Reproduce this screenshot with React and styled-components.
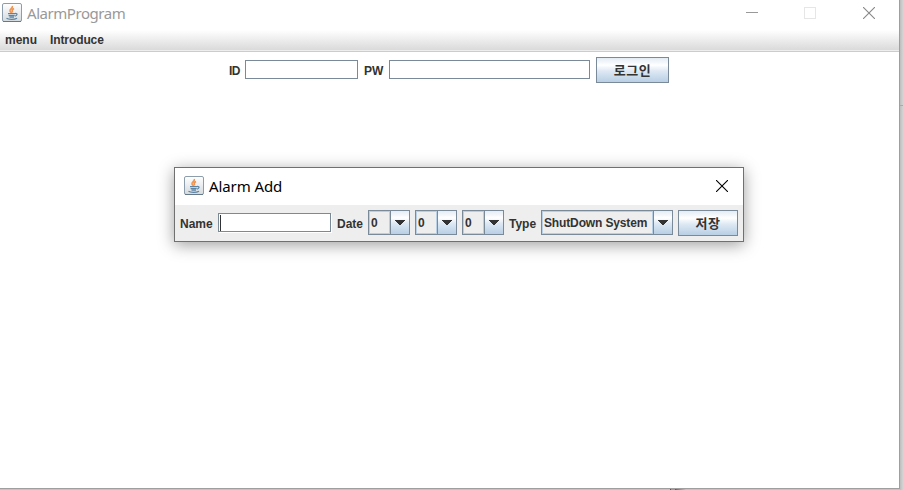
import React from "react";
import styled, { createGlobalStyle } from "styled-components";

const GlobalStyle = createGlobalStyle`
  * { box-sizing: border-box; }
  html, body { margin: 0; padding: 0; overflow: hidden; background: #c9c9c9; }
`;

const Desktop = styled.div`
  display: flex;
  align-items: flex-start;
  width: 903px;
  height: 490px;
  overflow: hidden;
  background: linear-gradient(90deg, #c4c4c4 670px, #555 670px, #555 671px, #999 671px, #999 675px, #555 675px, #777 677px, #c4c4c4 686px);
  font: bold 12px/14px "Liberation Sans", "Noto Sans CJK KR", sans-serif;
  color: #333;
`;

const Window = styled.div`
  position: relative;
  width: 900px;
  height: 489px;
  flex: none;
  background: #fff;
  border-right: 1px solid #9f9f9f;
  border-bottom: 1px solid #9f9f9f;
`;

const Backdrop = styled.div`
  width: 3px;
  height: 490px;
  background: linear-gradient(90deg, #bdbdbd, #d4d4d4);
`;

const BackdropTop = styled.div`
  height: 106px;
  border-bottom: 1px solid #aaa;
`;

const TitleBar = styled.div`
  display: flex;
  align-items: flex-start;
  height: ${(p) => (p.$dialog ? 37 : 30)}px;
  padding: ${(p) => (p.$dialog ? "8px 15px 0 9px" : "3px 24px 0 2px")};
  background: #fff;
`;

const Title = styled.span`
  flex: 1;
  margin-left: 5px;
  font: 400 15px/20px "Noto Sans", sans-serif;
  letter-spacing: ${(p) => p.$spacing}px;
  color: ${(p) => (p.$active ? "#000" : "#999")};
`;

const Controls = styled.div`
  display: flex;
  padding-top: 4px;
`;

const ControlSlot = styled.span`
  display: flex;
  width: ${(p) => p.$w}px;
`;

const MenuBar = styled.div`
  display: flex;
  gap: 13px;
  height: 22px;
  padding: 3px 5px 0;
  background: linear-gradient(#fff, #dadada 20px, #eee 20px);
  border-bottom: 1px solid #ccc;
`;

const MenuItem = styled.span`
  width: ${(p) => p.$w}px;
  white-space: nowrap;
  letter-spacing: ${(p) => p.$spacing || 0}px;
`;

const LoginForm = styled.div`
  display: flex;
  padding: 5px 0 0 229px;
`;

const Label = styled.label`
  width: ${(p) => p.$w}px;
  padding-top: 7px;
  white-space: nowrap;
  letter-spacing: ${(p) => p.$spacing || 0}px;
`;

const Field = styled.div`
  width: ${(p) => p.$w}px;
  height: 19px;
  margin: 3px 6px 0 0;
  padding: 1px;
  background: #fff;
  border: 1px solid #7a8a99;
  box-shadow: 1px 1px 0 #fff;
`;

const Caret = styled.div`
  width: 1px;
  height: 16px;
  background: #333;
`;

const Button = styled.button`
  display: flex;
  align-items: center;
  justify-content: center;
  width: ${(p) => p.$w}px;
  height: 26px;
  padding: 0;
  border: 1px solid #7a8a99;
  background: linear-gradient(#e3ecf4, #fff 30%, #dde8f3 55%, #b8cfe5);
  color: #333;
  font: 700 13px/16px "Noto Sans CJK KR", sans-serif;
  letter-spacing: 0.5px;
`;

const Dialog = styled.div`
  position: absolute;
  left: 174px;
  top: 167px;
  width: 570px;
  height: 75px;
  background: #eee;
  border: 1px solid #707070;
  box-shadow: 0 3px 15px rgba(0, 0, 0, 0.38);
`;

const AlarmForm = styled.div`
  display: flex;
  padding: 5px 5px 0;
`;

const Select = styled.div`
  display: flex;
  width: ${(p) => p.$w}px;
  height: 25px;
  margin-right: 5px;
  border: 1px solid #7a8a99;
`;

const SelectValue = styled.span`
  flex: 1;
  min-width: 0;
  padding: 4px 0 0 1px;
  border: 1px solid #b8cfe5;
  white-space: nowrap;
  letter-spacing: ${(p) => p.$spacing || 0}px;
`;

const SelectArrow = styled.span`
  display: flex;
  align-items: center;
  justify-content: center;
  width: 19px;
  border-left: 1px solid #7a8a99;
  background: linear-gradient(#e3ecf4, #fff 30%, #dde8f3 55%, #b8cfe5);
`;

function JavaIcon() {
  return (
    <svg width="20" height="20" viewBox="0 0 20 20">
      <defs>
        <linearGradient id="javaTile" x1="0" y1="0" x2="0" y2="1">
          <stop offset="0" stopColor="#fff" />
          <stop offset="1" stopColor="#d5dade" />
        </linearGradient>
      </defs>
      <rect x=".5" y=".5" width="19" height="18" rx="1.5" fill="url(#javaTile)" stroke="#8d9dab" />
      <path d="M1 18.5H19" stroke="#66798a" />
      <path d="M10.3 3c1 2-3 3-2.3 5 .2.8 1 1.3 1.5 2M12 5.5c-3 1.4-1.8 2.5-1.4 4" fill="none" stroke="#ee9450" strokeWidth="1.6" />
      <path d="M6 10.7h7.3M6.6 12.6h6M7.5 14.2h4.5M13.3 10.4c2.5-.2 2.2 2.1-.4 2.8M4.5 15.3c2 1.4 8 1.4 10.5-.1" fill="none" stroke="#5c83a2" strokeWidth="1.25" />
    </svg>
  );
}

function CloseIcon({ color }) {
  return (
    <svg width="12" height="12" viewBox="0 0 12 12">
      <path d="M0 0 12 12M12 0 0 12" stroke={color} strokeWidth="1.1" />
    </svg>
  );
}

function Combo({ width, value, spacing }) {
  return (
    <Select $w={width}>
      <SelectValue $spacing={spacing}>{value}</SelectValue>
      <SelectArrow>
        <svg width="10" height="5" viewBox="0 0 10 5" shapeRendering="crispEdges">
          <path d="M0 0H10V1H9V2H8V3H7V4H6V5H4V4H3V3H2V2H1V1H0Z" fill="#333" />
        </svg>
      </SelectArrow>
    </Select>
  );
}

export default function App() {
  return (
    <Desktop>
      <GlobalStyle />
      <Window>
        <TitleBar>
          <JavaIcon />
          <Title $spacing={-0.45}>AlarmProgram</Title>
          <Controls>
            <ControlSlot $w={58}>
              <svg width="12" height="12"><path d="M0 5.5H12" stroke="#999" /></svg>
            </ControlSlot>
            <ControlSlot $w={59}>
              <svg width="12" height="12"><rect x=".5" y=".5" width="11" height="11" fill="none" stroke="#e6e6e6" /></svg>
            </ControlSlot>
            <CloseIcon color="#888" />
          </Controls>
        </TitleBar>
        <MenuBar>
          <MenuItem $w={32}>menu</MenuItem>
          <MenuItem $w={56} $spacing={-0.1}>Introduce</MenuItem>
        </MenuBar>
        <LoginForm>
          <Label $w={16} $spacing={-0.5}>ID</Label>
          <Field $w={113} />
          <Label $w={25}>PW</Label>
          <Field $w={201} />
          <Button $w={73}>로그인</Button>
        </LoginForm>
        <Dialog>
          <TitleBar $dialog>
            <JavaIcon />
            <Title $active $spacing={-0.1}>Alarm Add</Title>
            <Controls><CloseIcon color="#000" /></Controls>
          </TitleBar>
          <AlarmForm>
            <Label $w={38}>Name</Label>
            <Field $w={113}><Caret /></Field>
            <Label $w={31}>Date</Label>
            <Combo width={42} value="0" />
            <Combo width={42} value="0" />
            <Combo width={42} value="0" />
            <Label $w={32}>Type</Label>
            <Combo width={132} value="ShutDown System" spacing={-0.14} />
            <Button $w={60}>저장</Button>
          </AlarmForm>
        </Dialog>
      </Window>
      <Backdrop><BackdropTop /></Backdrop>
    </Desktop>
  );
}
